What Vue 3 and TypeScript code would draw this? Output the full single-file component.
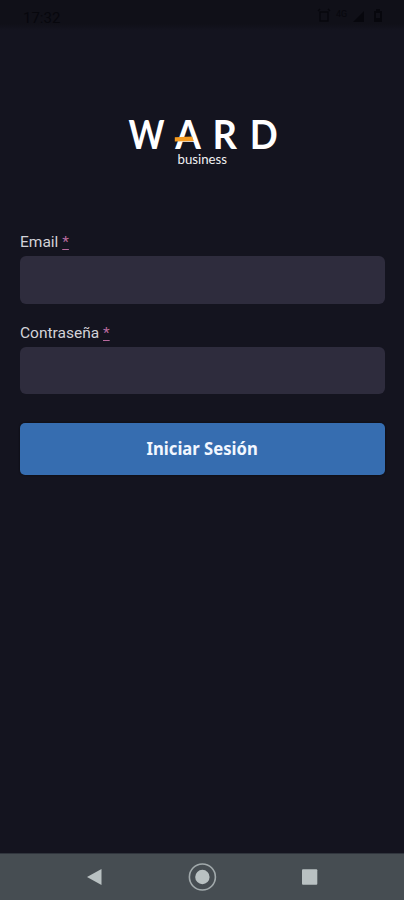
<script setup lang="ts">
import { ref } from 'vue'

interface Field {
  id: string
  label: string
  type: string
}

const fields: Field[] = [
  { id: 'email', label: 'Email', type: 'email' },
  { id: 'password', label: 'Contraseña', type: 'password' },
]
const values = ref<Record<string, string>>({ email: '', password: '' })
</script>

<template>
  <div class="screen">
    <header class="status">
      <span class="time">17:32</span>
      <svg class="status-icons" width="70" height="16" viewBox="0 0 70 16">
        <path d="M3 4h8v9H3zM1 3l2-2M13 3l-2-2" fill="none" stroke="currentColor" stroke-width="1.3" />
        <text x="19" y="9" font-size="9">4G</text>
        <path d="M36 14L47 3v11zM57 3h2V1h4v2h2v11h-8z" />
        <path class="battery-level" d="M59 5h4v5h-4z" />
      </svg>
    </header>

    <main class="content">
      <svg class="logo" width="154" height="70" viewBox="0 -12 154 70">
        <g class="wordmark">
          <text x="2.5" y="35" textLength="36" lengthAdjust="spacingAndGlyphs">W</text>
          <text x="49.3" y="35" textLength="25.6" lengthAdjust="spacingAndGlyphs">A</text>
          <text x="86.6" y="35" textLength="24.5" lengthAdjust="spacingAndGlyphs">R</text>
          <text x="123.8" y="35" textLength="28" lengthAdjust="spacingAndGlyphs">D</text>
        </g>
        <path class="accent" d="M48.8 23.3l17.4-.8 1.6 4.6-19 .4z" />
        <text class="tagline" x="51.5" y="50" textLength="49.5" lengthAdjust="spacingAndGlyphs">business</text>
      </svg>

      <form class="form" @submit.prevent>
        <div v-for="field in fields" :key="field.id" class="field">
          <label :for="field.id">{{ field.label }} <span class="required">*</span></label>
          <input :id="field.id" v-model="values[field.id]" :type="field.type" />
        </div>
        <button type="submit"><span>Iniciar Sesión</span></button>
      </form>
    </main>

    <nav class="navbar">
      <svg width="30" height="30" viewBox="0 0 30 30"><path d="M7 15L21.5 7v16z" /></svg>
      <svg width="30" height="30" viewBox="0 0 30 30">
        <circle class="ring" cx="15.4" cy="15" r="13" />
        <circle cx="15.4" cy="15" r="7.2" />
      </svg>
      <svg width="30" height="30" viewBox="0 0 30 30"><rect x="7" y="7.3" width="15.3" height="15.5" rx="1" /></svg>
    </nav>
  </div>
</template>

<style>
body {
  background: #14141f;
}
</style>

<style scoped>
.screen {
  display: flex;
  flex-direction: column;
  height: 900px;
  overflow: hidden;
  background: #14141f;
  font-family: Roboto, "Liberation Sans", sans-serif;
}

.status {
  box-sizing: border-box;
  display: flex;
  justify-content: space-between;
  height: 30px;
  padding: 8px 17px 0 23px;
  background: linear-gradient(#101018 80%, #14141f);
  color: #07070d;
}

.time {
  font-size: 15px;
  line-height: 20px;
}

.status-icons {
  fill: currentColor;
}

.battery-level {
  fill: #101018;
}

.content {
  flex: 1;
  display: flex;
  flex-direction: column;
  padding: 72px 19px 0 20px;
}

.logo {
  margin-left: 106px;
}

.wordmark {
  fill: #fff;
  font: 700 40px Lato, sans-serif;
}

.accent {
  fill: #f59b20;
}

.tagline {
  fill: #f1f1f3;
  font: 400 13px Lato, sans-serif;
}

.form {
  display: flex;
  flex-direction: column;
  margin-top: 60px;
}

.field {
  display: flex;
  flex-direction: column;
  gap: 4px;
  margin-bottom: 19px;
}

label {
  height: 20px;
  color: #d3d2d8;
  font-size: 15.5px;
  line-height: 20px;
}

.required {
  color: #b7699d;
  text-decoration: underline;
  text-decoration-thickness: 1px;
  text-underline-offset: 2px;
}

input {
  box-sizing: border-box;
  width: 100%;
  height: 47.5px;
  padding: 0 14px;
  border: 0;
  border-radius: 6px;
  outline: 0;
  background: #2e2c3d;
  color: #fff;
  font: inherit;
}

button {
  height: 51.5px;
  margin-top: 10px;
  padding: 0;
  border: 0;
  border-radius: 5px;
  background: #366db0;
  box-shadow: 0 0 2px #08080d;
  color: #f2f7ff;
  font: 700 18px/51px "Noto Sans", sans-serif;
}

button span {
  display: inline-block;
  transform: scaleX(0.925);
}

.navbar {
  box-sizing: border-box;
  display: flex;
  justify-content: space-between;
  height: 47px;
  padding: 8px 79px 0 79.5px;
  border-top: 1px solid #30353d;
  background: #464d52;
  fill: #b9c1c2;
}

.ring {
  fill: none;
  stroke: #a1a9ab;
  stroke-width: 1.6;
}
</style>
